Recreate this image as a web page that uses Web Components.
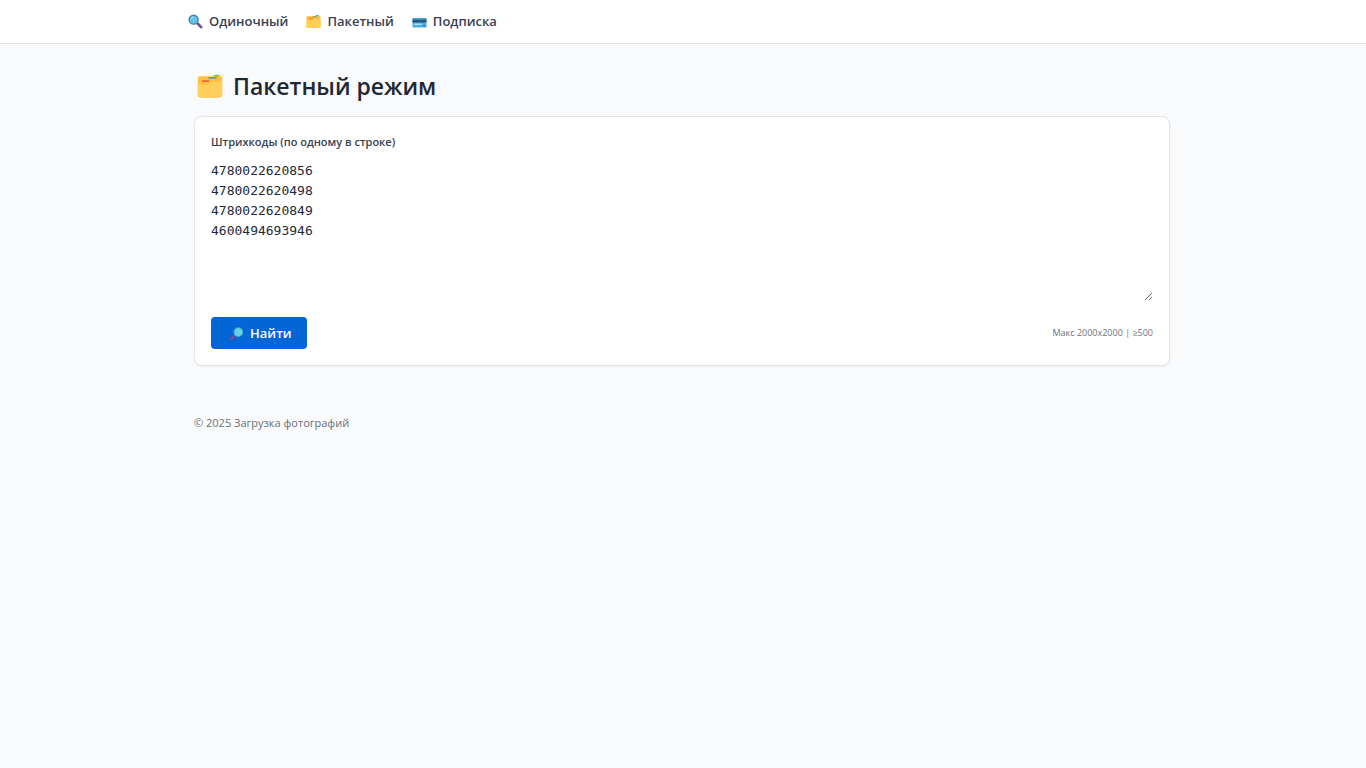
<!DOCTYPE html>
<html lang="ru">
<head>
<meta charset="UTF-8">
<meta name="viewport" content="width=device-width, initial-scale=1">
<title>Пакетный режим</title>
<style>
    body {
        margin: 0;
        background: #f9fafc;
        color: #1f2933;
        font-family: "Open Sans", "Noto Sans", sans-serif;
        font-size: 13px;
        line-height: 20px;
    }
</style>
</head>
<body>
    <app-nav>
        <nav-link href="#single" icon="search">Одиночный</nav-link>
        <nav-link href="#batch" icon="folder">Пакетный</nav-link>
        <nav-link href="#subscription" icon="card">Подписка</nav-link>
    </app-nav>
    <page-shell>
        <page-title icon="folder">Пакетный режим</page-title>
        <batch-form label="Штрихкоды (по одному в строке)" hint="Макс 2000x2000 | ≥500">Найти</batch-form>
        <page-footer slot="footer">© 2025 Загрузка фотографий</page-footer>
    </page-shell>

<script>
const ICONS = {
    search: `
        <path d="M18 18l3 3" stroke="#626a78" stroke-width="3"/>
        <path d="M21 21l7 7" stroke="#75528b" stroke-width="6" stroke-linecap="round"/>
        <circle cx="12" cy="12" r="9.5" fill="#60c5ed" stroke="#4680a0" stroke-width="3"/>
        <path d="M6 11a7 7 0 0 1 6-5" stroke="#91e3fa" stroke-width="2" fill="none"/>`,
    searchRight: `
        <path d="M14 19l-3 3" stroke="#7177a5" stroke-width="3"/>
        <path d="M10 23l-5 5" stroke="#90477e" stroke-width="5" stroke-linecap="round"/>
        <circle cx="20" cy="13" r="9.5" fill="#65d2e8" stroke="#45a5cb" stroke-width="2"/>`,
    folder: `
        <path d="M20 4q0-2 2-2h4q2 0 2 2v3h-8z" fill="#48c98a"/>
        <path d="M1 7q0-3 3-3h25q2 0 2 2v21q0 3-3 3H4q-3 0-3-3z" fill="#ffc043"/>
        <path d="M14 6h10" stroke="#509d9b" stroke-width="2"/>
        <path d="M1 14h13l3-3h14v16q0 3-3 3H4q-3 0-3-3z" fill="#ffce5b"/>
        <path d="M7 10h7" stroke="#e26b2e" stroke-width="2" stroke-linecap="round"/>`,
    card: `
        <rect x="1" y="9" width="30" height="20" rx="2" fill="#47aee7"/>
        <path d="M1 11q0-2 2-2h26q2 0 2 2v2H1z" fill="#3d91b8"/>
        <path d="M1 13h30v5H1z" fill="#27516b"/>
        <path d="M4 22h17" stroke="#a7e0f7" stroke-width="3"/>
        <path d="M24 25h4" stroke="#257bc1" stroke-width="3"/>`
};

class EmojiIcon extends HTMLElement {
    connectedCallback() {
        this.attachShadow({ mode: 'open' });
        this.shadowRoot.innerHTML = `
            <style>
                :host {
                    display: block;
                    flex: none;
                    width: var(--icon-size, 16px);
                    height: var(--icon-size, 16px);
                }

                svg {
                    display: block;
                    width: 100%;
                    height: 100%;
                }
            </style>
            <svg viewBox="0 0 32 32" aria-hidden="true">${ICONS[this.getAttribute('name')]}</svg>
        `;
    }
}

class AppNav extends HTMLElement {
    connectedCallback() {
        this.attachShadow({ mode: 'open' });
        this.shadowRoot.innerHTML = `
            <style>
                :host {
                    display: block;
                    background: white;
                    border-bottom: 1px solid #dfe5ea;
                }

                nav {
                    display: flex;
                    gap: 18px;
                    max-width: 990px;
                    margin: 0 auto;
                    padding: 11px 0 12px;
                }
            </style>
            <nav><slot></slot></nav>
        `;
    }
}

class NavLink extends HTMLElement {
    connectedCallback() {
        this.attachShadow({ mode: 'open' });
        this.shadowRoot.innerHTML = `
            <style>
                :host {
                    display: block;
                }

                a {
                    --icon-size: 15px;
                    display: flex;
                    align-items: center;
                    gap: 6px;
                    color: #374151;
                    font-weight: 600;
                    text-decoration: none;
                }

                a:hover {
                    color: #0366d6;
                }
            </style>
            <a href="${this.getAttribute('href')}">
                <emoji-icon name="${this.getAttribute('icon')}"></emoji-icon>
                <span><slot></slot></span>
            </a>
        `;
    }
}

class PageShell extends HTMLElement {
    connectedCallback() {
        this.attachShadow({ mode: 'open' });
        this.shadowRoot.innerHTML = `
            <style>
                :host {
                    display: block;
                    max-width: 976px;
                    margin: 0 auto;
                    padding: 24px 18px 24px 16px;
                }

                main {
                    display: grid;
                    gap: 12px;
                    margin-bottom: 47px;
                }
            </style>
            <main><slot></slot></main>
            <slot name="footer"></slot>
        `;
    }
}

class PageTitle extends HTMLElement {
    connectedCallback() {
        this.attachShadow({ mode: 'open' });
        this.shadowRoot.innerHTML = `
            <style>
                :host {
                    display: block;
                }

                h1 {
                    --icon-size: 26px;
                    display: flex;
                    align-items: center;
                    gap: 10px;
                    margin: 0;
                    padding: 0 3px;
                    font-size: 23px;
                    font-weight: 600;
                    line-height: 36px;
                }
            </style>
            <h1><emoji-icon name="${this.getAttribute('icon')}"></emoji-icon><span><slot></slot></span></h1>
        `;
    }
}

class BatchForm extends HTMLElement {
    connectedCallback() {
        this.attachShadow({ mode: 'open' });
        this.shadowRoot.innerHTML = `
            <style>
                :host {
                    display: block;
                    padding: 16px;
                    background: white;
                    border: 1px solid #e1e5ea;
                    border-radius: 8px;
                    box-shadow: 0 1px 3px rgba(0, 0, 0, 0.05);
                }

                form {
                    display: flex;
                    flex-direction: column;
                }

                label {
                    margin-bottom: 10px;
                    color: #374151;
                    font-size: 11px;
                    font-weight: 600;
                    line-height: 18px;
                }

                textarea {
                    height: 140px;
                    margin: 0 0 16px;
                    padding: 0;
                    box-sizing: border-box;
                    border: 0;
                    outline: 0;
                    background: transparent;
                    color: #1f2937;
                    font: 13px/20px "DejaVu Sans Mono", monospace;
                    resize: vertical;
                }

                .actions {
                    display: flex;
                    align-items: center;
                    justify-content: space-between;
                }

                button {
                    --icon-size: 15px;
                    display: flex;
                    align-items: center;
                    gap: 6px;
                    height: 32px;
                    padding: 0 15px 0 18px;
                    border: 0;
                    border-radius: 4px;
                    background: #0366d6;
                    color: white;
                    font: inherit;
                    font-weight: 600;
                    cursor: pointer;
                }

                .hint {
                    color: #6b7280;
                    font-size: 9px;
                }
            </style>
            <form>
                <label for="codes">${this.getAttribute('label')}</label>
                <textarea id="codes" spellcheck="false">4780022620856
4780022620498
4780022620849
4600494693946</textarea>
                <div class="actions">
                    <button type="submit"><emoji-icon name="searchRight"></emoji-icon><span><slot></slot></span></button>
                    <span class="hint">${this.getAttribute('hint')}</span>
                </div>
            </form>
        `;

        this.shadowRoot.querySelector('form').addEventListener('submit', (e) => {
            e.preventDefault();
        });
    }
}

class PageFooter extends HTMLElement {
    connectedCallback() {
        this.attachShadow({ mode: 'open' });
        this.shadowRoot.innerHTML = `
            <style>
                :host {
                    display: block;
                    color: #6b7075;
                    font-size: 11px;
                }

                footer {
                    line-height: 20px;
                }
            </style>
            <footer><slot></slot></footer>
        `;
    }
}

customElements.define('emoji-icon', EmojiIcon);
customElements.define('app-nav', AppNav);
customElements.define('nav-link', NavLink);
customElements.define('page-shell', PageShell);
customElements.define('page-title', PageTitle);
customElements.define('batch-form', BatchForm);
customElements.define('page-footer', PageFooter);
</script>
</body>
</html>
